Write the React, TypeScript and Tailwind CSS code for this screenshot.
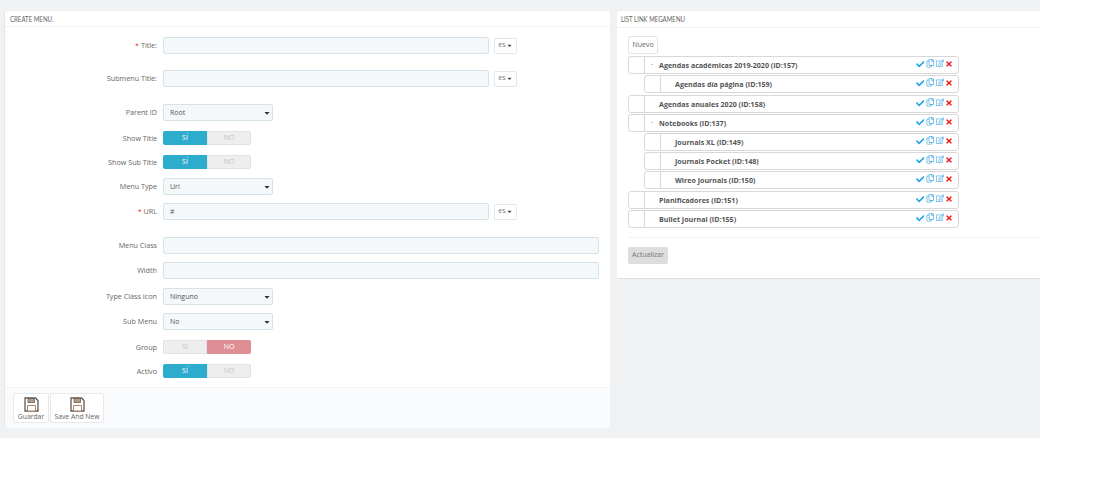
import React from "react";
import { FaCheck, FaRegCopy, FaRegEdit, FaTimes, FaCaretDown } from "react-icons/fa";

function Row({ label, req, mt, h, children }: { label: string; req?: boolean; mt: string; h: string; children: React.ReactNode }) {
  return (
    <div className={`flex items-center ${mt} ${h}`}>
      <div className="w-[148px] pt-[1px] text-right text-[7.2px] leading-none text-[#666]">
        {req && <span className="text-[#e5383b]">* </span>}
        {label}
      </div>
      <div className="ml-[6px] flex h-full items-center">{children}</div>
    </div>
  );
}

function Input({ w, value }: { w: string; value?: string }) {
  return (
    <div className={`${w} flex h-full items-center rounded-[2px] border border-[#d6e2e8] bg-[#f4f8fa] pl-[6px] pt-[1px] text-[7px] text-[#666]`}>
      {value}
    </div>
  );
}

function Lang() {
  return (
    <div className="ml-[5px] flex h-[16px] w-[23px] items-center justify-center rounded-[2px] border border-[#e4e8ea] bg-white text-[7px] text-[#777]">
      es<FaCaretDown className="text-[7px] text-[#444]" />
    </div>
  );
}

function Select({ value }: { value: string }) {
  return (
    <div className="flex h-full w-[110px] items-center justify-between rounded-[2px] border border-[#d6e2e8] bg-[#f4f8fa] pl-[6px] pr-[1px] pt-[1px] text-[7px] text-[#555]">
      {value}
      <FaCaretDown className="text-[8px] text-[#333]" />
    </div>
  );
}

function Switch({ on }: { on: boolean }) {
  return (
    <div className="flex h-[14px] w-[88px] text-center text-[7px] leading-[14px]">
      <div className={`w-[44px] rounded-l-[2px] ${on ? "bg-[#2eacce] text-white" : "border border-[#e2e2e2] bg-[#eeeeee] leading-[12px] text-[#c4c4c4]"}`}>SÍ</div>
      <div className={`w-[44px] rounded-r-[2px] ${on ? "border border-[#e2e2e2] bg-[#eeeeee] leading-[12px] text-[#c4c4c4]" : "bg-[#e08e95] text-white"}`}>NO</div>
    </div>
  );
}

function SaveIcon() {
  return (
    <svg width="15" height="15" viewBox="0 0 15 15" fill="none">
      <path d="M1 1h10.5L14 3.5V14H1z" stroke="#5f5a58" strokeWidth="1.3" />
      <path d="M4 1.5h6.5v4H4z" fill="#b59a84" stroke="#6a5f58" strokeWidth="0.8" />
      <path d="M3.5 8.5h8V14h-8z" fill="#fff" stroke="#b0856a" strokeWidth="1" />
    </svg>
  );
}

function FootBtn({ label, w }: { label: string; w: string }) {
  return (
    <div className={`${w} flex h-[30px] flex-col items-center rounded-[2px] border border-[#e8e8e8] bg-white pt-[3px] text-[6.8px] leading-none text-[#666]`}>
      <SaveIcon />
      <span className="mt-[2px]">{label}</span>
    </div>
  );
}

function MenuRow({ label, indent, dash, mt }: { label: string; indent?: boolean; dash?: boolean; mt: string }) {
  return (
    <div className={`flex h-[18px] items-stretch rounded-[3px] border border-[#d8d8d8] bg-white ${mt} ${indent ? "ml-[16px]" : ""}`}>
      <div className="w-[16px] shrink-0 rounded-l-[3px] border-r border-[#d8d8d8]" />
      <div className="w-[14px] shrink-0 text-center text-[7px] leading-[14px] text-[#888]">{dash ? "-" : ""}</div>
      <div className="flex-1 text-[7.1px] font-bold leading-[16px] text-[#555]">{label}</div>
      <div className="flex items-start gap-[1px] pr-[5px] pt-[2px] text-[8.5px]">
        <FaCheck className="mr-[1px] mt-[1px] text-[#1fa5e6]" />
        <FaRegCopy className="text-[#5db4e6]" />
        <FaRegEdit className="text-[#5db4e6]" />
        <FaTimes className="mt-[1px] text-[8px] text-[#f01a1a]" />
      </div>
    </div>
  );
}

export default function App() {
  return (
    <div className="h-[483px] w-[1100px] overflow-hidden bg-white" style={{ fontFamily: '"Open Sans", sans-serif' }}>
      <div className="flex h-[438px] w-[1040px] items-start gap-[7px] overflow-hidden bg-[#eff1f2] pl-[4px] pt-[11px]">
        <div className="flex h-[417px] w-[606px] shrink-0 flex-col rounded-[3px] border-l border-[#e2e4e6] bg-white">
          <div className="h-[16px] border-b border-[#f2f2f2] pl-[5px] text-[#666]">
            <div className="origin-left scale-x-[0.76] text-[8px] leading-[17px]" style={{ fontFamily: "Lato, sans-serif" }}>CREATE MENU.</div>
          </div>
          <div className="flex-1 pl-[4px]">
            <Row label="Title:" req mt="mt-[10px]" h="h-[17px]"><Input w="w-[326px]" /><Lang /></Row>
            <Row label="Submenu Title:" mt="mt-[16px]" h="h-[17px]"><Input w="w-[326px]" /><Lang /></Row>
            <Row label="Parent ID" mt="mt-[17px]" h="h-[17px]"><Select value="Root" /></Row>
            <Row label="Show Title" mt="mt-[10px]" h="h-[14px]"><Switch on /></Row>
            <Row label="Show Sub Title" mt="mt-[10px]" h="h-[14px]"><Switch on /></Row>
            <Row label="Menu Type" mt="mt-[9px]" h="h-[17px]"><Select value="Url" /></Row>
            <Row label="URL" req mt="mt-[8px]" h="h-[17px]"><Input w="w-[326px]" value="#" /><Lang /></Row>
            <Row label="Menu Class" mt="mt-[17px]" h="h-[17px]"><Input w="w-[436px]" /></Row>
            <Row label="Width" mt="mt-[8px]" h="h-[17px]"><Input w="w-[436px]" /></Row>
            <Row label="Type Class Icon" mt="mt-[9px]" h="h-[17px]"><Select value="Ninguno" /></Row>
            <Row label="Sub Menu" mt="mt-[8px]" h="h-[17px]"><Select value="No" /></Row>
            <Row label="Group" mt="mt-[10px]" h="h-[14px]"><Switch on={false} /></Row>
            <Row label="Activo" mt="mt-[10px]" h="h-[14px]"><Switch on /></Row>
          </div>
          <div className="flex h-[41px] gap-[1px] rounded-b-[3px] border-t border-[#f0f2f3] bg-[#fafbfc] pl-[8px] pt-[5px]">
            <FootBtn label="Guardar" w="w-[36px]" />
            <FootBtn label="Save And New" w="w-[54px]" />
          </div>
        </div>
        <div className="flex h-[268px] w-[440px] shrink-0 flex-col rounded-[3px] border-b border-[#dcdfe1] bg-white">
          <div className="h-[17px] border-b border-[#f2f2f2] pl-[4px] text-[#666]">
            <div className="origin-left scale-x-[0.76] text-[8px] leading-[17px]" style={{ fontFamily: "Lato, sans-serif" }}>LIST LINK MEGAMENU</div>
          </div>
          <div className="pl-[11px]">
            <div className="mt-[8px] flex h-[18px] w-[30px] items-center justify-center rounded-[2px] border border-[#e4e4e4] text-[7px] text-[#666]">Nuevo</div>
            <div className="w-[331px]">
              <MenuRow label="Agendas académicas 2019-2020 (ID:157)" dash mt="mt-[2px]" />
              <MenuRow label="Agendas día página (ID:159)" indent mt="mt-[1px]" />
              <MenuRow label="Agendas anuales 2020 (ID:158)" mt="mt-[2px]" />
              <MenuRow label="Notebooks (ID:137)" dash mt="mt-[1px]" />
              <MenuRow label="Journals XL (ID:149)" indent mt="mt-[1px]" />
              <MenuRow label="Journals Pocket (ID:148)" indent mt="mt-[1px]" />
              <MenuRow label="Wireo Journals (ID:150)" indent mt="mt-[1px]" />
              <MenuRow label="Planificadores (ID:151)" mt="mt-[2px]" />
              <MenuRow label="Bullet Journal (ID:155)" mt="mt-[1px]" />
            </div>
            <div className="mt-[9px] h-px bg-[#f2f2f2]" />
            <div className="mt-[9px] flex h-[17px] w-[40px] items-center justify-center rounded-[2px] bg-[#dddddd] text-[7px] text-[#777]">Actualizar</div>
          </div>
        </div>
      </div>
    </div>
  );
}
